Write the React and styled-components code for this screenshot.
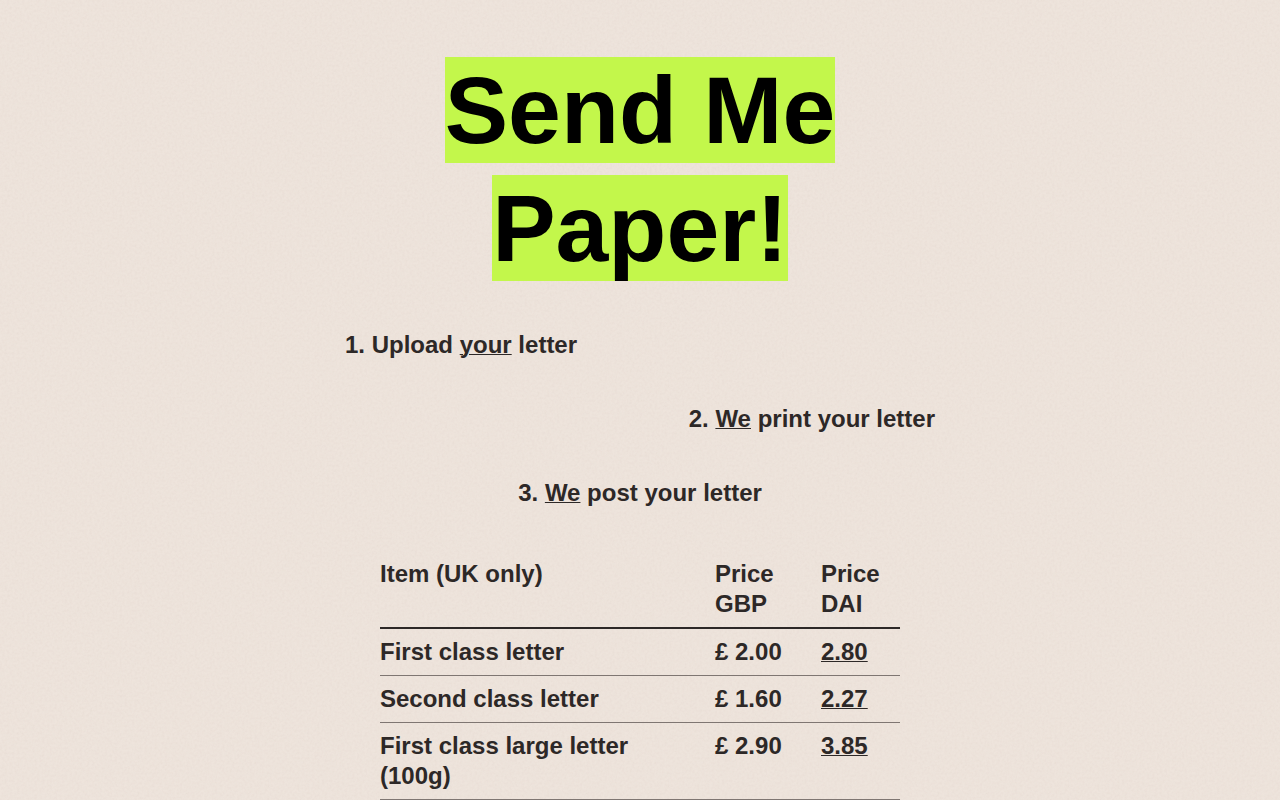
import React from 'react';
import styled, { createGlobalStyle } from 'styled-components';

const colors = {
  paper: '#eee4dc',
  ink: '#2d2827',
  black: '#000000',
  highlight: '#c3f74b',
  rule: '#7f7672',
};

// fine paper grain, tiled over the page colour
const grain = encodeURIComponent(
  `<svg xmlns="http://www.w3.org/2000/svg" width="400" height="400">
    <filter id="g" x="0" y="0" width="100%" height="100%">
      <feTurbulence type="fractalNoise" baseFrequency="0.4" numOctaves="3" seed="4" stitchTiles="stitch"/>
      <feColorMatrix values="0 0 0 0 0.45  0 0 0 0 0.35  0 0 0 0 0.3  0.13 0 0 0 -0.04"/>
    </filter>
    <rect width="400" height="400" filter="url(#g)"/>
  </svg>`
);

const GlobalStyle = createGlobalStyle`
  * {
    box-sizing: border-box;
  }
  body {
    margin: 0;
    color: ${colors.ink};
    background: ${colors.paper} url("data:image/svg+xml,${grain}");
    font-family: 'Liberation Sans', Arial, sans-serif;
    font-size: 24px;
    font-weight: bold;
    line-height: 30px;
  }
`;

const Main = styled.main`
  display: flex;
  flex-direction: column;
  gap: 43px;
  width: 100%;
  max-width: 640px;
  margin: 0 auto;
  padding: 51px 25px 0;
`;

const Title = styled.h1`
  margin: 0;
  font-size: 95px;
  line-height: 118px;
  text-align: center;
`;

const Highlight = styled.mark`
  color: ${colors.black};
  background-color: ${colors.highlight};
`;

const Steps = styled.ol`
  display: flex;
  flex-direction: column;
  gap: 44px;
  margin: 0;
  padding: 0;
  list-style: none;
`;

const Step = styled.li`
  text-align: ${(props) => props.$align};
`;

const Underline = styled.u`
  text-decoration-thickness: 1px;
`;

const Table = styled.table`
  width: 100%;
  max-width: 520px;
  margin: 0 auto;
  border-collapse: collapse;
  table-layout: fixed;
`;

const HeadCell = styled.th`
  width: ${(props) => props.$width};
  padding: 8px 32px 8px 0;
  border-bottom: 2px solid ${colors.ink};
  text-align: left;
  vertical-align: top;
  &:last-child {
    padding-right: 0;
  }
`;

const Cell = styled.td`
  padding: 8px 32px 8px 0;
  border-bottom: 1px solid ${colors.rule};
  vertical-align: top;
  &:last-child {
    padding-right: 0;
  }
`;

const PriceLink = styled.a`
  color: inherit;
  text-decoration-thickness: 1px;
`;

const steps = [
  { before: '1. Upload ', who: 'your', after: ' letter', align: 'left' },
  { before: '2. ', who: 'We', after: ' print your letter', align: 'right' },
  { before: '3. ', who: 'We', after: ' post your letter', align: 'center' },
];

const items = [
  { name: 'First class letter', gbp: '2.00', dai: '2.80' },
  { name: 'Second class letter', gbp: '1.60', dai: '2.27' },
  { name: 'First class large letter (100g)', gbp: '2.90', dai: '3.85' },
];

export default function App() {
  return (
    <>
      <GlobalStyle />
      <Main>
        <Title>
          <Highlight>Send Me Paper!</Highlight>
        </Title>
        <Steps>
          {steps.map((step) => (
            <Step key={step.before} $align={step.align}>
              {step.before}
              <Underline>{step.who}</Underline>
              {step.after}
            </Step>
          ))}
        </Steps>
        <Table>
          <thead>
            <tr>
              <HeadCell>Item (UK only)</HeadCell>
              <HeadCell $width="106px">Price GBP</HeadCell>
              <HeadCell $width="79px">Price DAI</HeadCell>
            </tr>
          </thead>
          <tbody>
            {items.map((item) => (
              <tr key={item.name}>
                <Cell>{item.name}</Cell>
                <Cell>£ {item.gbp}</Cell>
                <Cell>
                  <PriceLink href="#dai">{item.dai}</PriceLink>
                </Cell>
              </tr>
            ))}
          </tbody>
        </Table>
      </Main>
    </>
  );
}
